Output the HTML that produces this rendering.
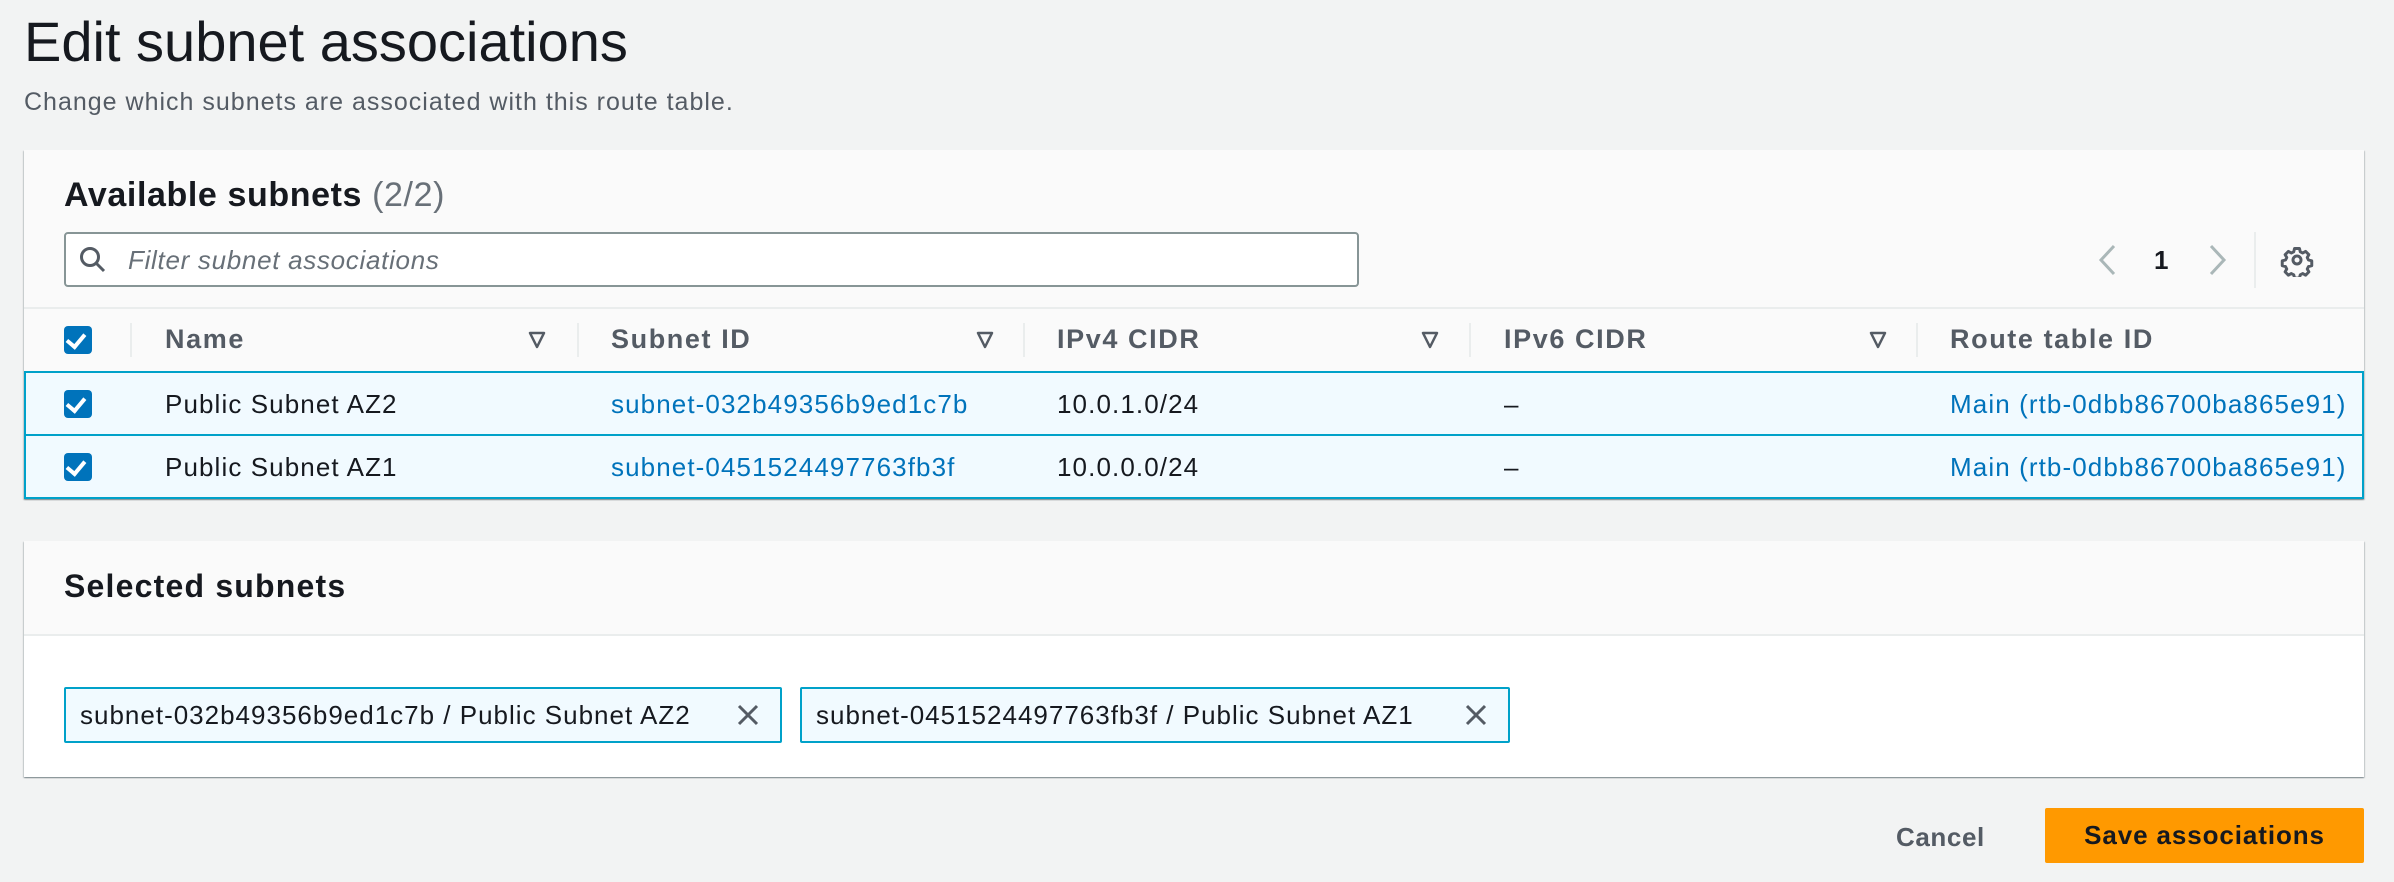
<!DOCTYPE html>
<html><head><meta charset="utf-8"><style>
*{box-sizing:border-box;margin:0;padding:0}
body{width:2394px;height:882px;background:#f2f3f3;font-family:"Liberation Sans",sans-serif;color:#16191f;position:relative;overflow:hidden}
.a{position:absolute;white-space:nowrap}
.card{position:absolute;background:#fff;box-shadow:0 1px 1px 0 rgba(0,28,36,.3),1px 1px 1px 0 rgba(0,28,36,.15),-1px 1px 1px 0 rgba(0,28,36,.15)}
.cb{position:absolute;width:28px;height:28px;background:#0073bb;border-radius:4px}
.cb::after{content:"";position:absolute;left:6px;top:4px;width:8px;height:14px;border:solid #fff;border-width:0 4px 4px 0;transform:rotate(40deg)}
.th{font-weight:bold;color:#545b64;font-size:27px;letter-spacing:1.6px}
.td{font-size:26px;color:#16191f;letter-spacing:1.1px}
.lk{color:#0073bb}
.sep{position:absolute;width:2px;height:34px;background:#eaeded;top:323px}
.tri{position:absolute;top:330px}
.row{position:absolute;left:24px;width:2340px;height:65px;background:#f1faff;border:2px solid #00a1c9}
.tok{position:absolute;top:687px;height:56px;background:#f1faff;border:2px solid #00a1c9;border-radius:2px;font-size:26px;letter-spacing:1px;line-height:52px;padding-left:14px}
</style></head><body>
<div class="a" style="left:24px;top:6px;font-size:56px;line-height:72px">Edit subnet associations</div>
<div class="a" style="left:24px;top:87px;font-size:25px;letter-spacing:1px;color:#545b64;line-height:30px">Change which subnets are associated with this route table.</div>

<div class="card" style="left:24px;top:150px;width:2340px;height:349px;background:#fafafa"></div>
<div class="a" style="left:24px;top:372px;width:2340px;height:127px;background:#fff"></div>
<div class="a" style="left:24px;top:307px;width:2340px;height:2px;background:#eaeded"></div>
<div class="a" style="left:64px;top:175px;font-size:34px;letter-spacing:.6px;font-weight:bold;line-height:40px">Available subnets <span style="font-weight:normal;color:#687078">(2/2)</span></div>
<div class="a" style="left:64px;top:232px;width:1295px;height:55px;background:#fff;border:2px solid #879596;border-radius:4px"></div>
<svg class="a" style="left:78px;top:245px" width="30" height="30" viewBox="0 0 30 30"><circle cx="12" cy="12" r="8.5" fill="none" stroke="#545b64" stroke-width="3"/><path d="M18 18l8 8" stroke="#545b64" stroke-width="3"/></svg>
<div class="a" style="left:128px;top:244px;font-size:26px;letter-spacing:.7px;font-style:italic;color:#687078;line-height:32px">Filter subnet associations</div>
<svg class="a" style="left:2095px;top:243px" width="24" height="34"><path d="M19 3L6 17l13 14" fill="none" stroke="#aab7b8" stroke-width="3"/></svg>
<div class="a" style="left:2154px;top:244px;font-size:26px;font-weight:bold;line-height:32px">1</div>
<svg class="a" style="left:2206px;top:243px" width="24" height="34"><path d="M5 3l13 14L5 31" fill="none" stroke="#aab7b8" stroke-width="3"/></svg>
<div class="a" style="left:2254px;top:232px;width:2px;height:56px;background:#eaeded"></div>
<svg class="a" style="left:2280px;top:243px" width="34" height="34" viewBox="0 0 34 34"><path d="M14 3h6l1 4 3 1.5 3.5-2 4 4-2 3.5 1.5 3 4 1v6l-4 1-1.5 3 2 3.5-4 4-3.5-2-3 1.5-1 4h-6l-1-4-3-1.5-3.5 2-4-4 2-3.5-1.5-3-4-1v-6l4-1 1.5-3-2-3.5 4-4 3.5 2 3-1.5z" transform="translate(17 17) scale(.82) translate(-17 -17)" fill="none" stroke="#545b64" stroke-width="3.6" stroke-linejoin="round"/><circle cx="17" cy="17" r="4" fill="none" stroke="#545b64" stroke-width="3"/></svg>

<div class="cb" style="left:64px;top:326px"></div>
<div class="a th" style="left:165px;top:324px">Name</div>
<div class="a th" style="left:611px;top:324px">Subnet ID</div>
<div class="a th" style="left:1057px;top:324px">IPv4 CIDR</div>
<div class="a th" style="left:1504px;top:324px">IPv6 CIDR</div>
<div class="a th" style="left:1950px;top:324px">Route table ID</div>
<div class="sep" style="left:130px"></div>
<div class="sep" style="left:577px"></div><div class="sep" style="left:1023px"></div><div class="sep" style="left:1469px"></div><div class="sep" style="left:1916px"></div>
<svg class="tri" style="left:527px" width="20" height="20"><path d="M3 3h14L10 17z" fill="none" stroke="#545b64" stroke-width="2.5" stroke-linejoin="round"/></svg>
<svg class="tri" style="left:975px" width="20" height="20"><path d="M3 3h14L10 17z" fill="none" stroke="#545b64" stroke-width="2.5" stroke-linejoin="round"/></svg>
<svg class="tri" style="left:1420px" width="20" height="20"><path d="M3 3h14L10 17z" fill="none" stroke="#545b64" stroke-width="2.5" stroke-linejoin="round"/></svg>
<svg class="tri" style="left:1868px" width="20" height="20"><path d="M3 3h14L10 17z" fill="none" stroke="#545b64" stroke-width="2.5" stroke-linejoin="round"/></svg>

<div class="row" style="top:371px"></div>
<div class="row" style="top:434px"></div>
<div class="cb" style="left:64px;top:390px"></div>
<div class="cb" style="left:64px;top:453px"></div>
<div class="a td" style="left:165px;top:389px">Public Subnet AZ2</div>
<div class="a td lk" style="left:611px;top:389px">subnet-032b49356b9ed1c7b</div>
<div class="a td" style="left:1057px;top:389px">10.0.1.0/24</div>
<div class="a td" style="left:1504px;top:389px">–</div>
<div class="a td lk" style="left:1950px;top:389px">Main (rtb-0dbb86700ba865e91)</div>
<div class="a td" style="left:165px;top:452px">Public Subnet AZ1</div>
<div class="a td lk" style="left:611px;top:452px">subnet-0451524497763fb3f</div>
<div class="a td" style="left:1057px;top:452px">10.0.0.0/24</div>
<div class="a td" style="left:1504px;top:452px">–</div>
<div class="a td lk" style="left:1950px;top:452px">Main (rtb-0dbb86700ba865e91)</div>

<div class="card" style="left:24px;top:541px;width:2340px;height:236px"></div>
<div class="a" style="left:24px;top:541px;width:2340px;height:95px;background:#fafafa;border-bottom:2px solid #eaeded"></div>
<div class="a" style="left:64px;top:568px;font-size:32px;letter-spacing:1.2px;font-weight:bold;line-height:36px">Selected subnets</div>
<div class="tok" style="left:64px;width:718px">subnet-032b49356b9ed1c7b / Public Subnet AZ2</div>
<div class="tok" style="left:800px;width:710px">subnet-0451524497763fb3f / Public Subnet AZ1</div>
<svg class="a" style="left:736px;top:703px" width="24" height="24"><path d="M3 3l18 18M21 3L3 21" stroke="#545b64" stroke-width="3"/></svg>
<svg class="a" style="left:1464px;top:703px" width="24" height="24"><path d="M3 3l18 18M21 3L3 21" stroke="#545b64" stroke-width="3"/></svg>

<div class="a" style="left:1896px;top:822px;font-size:26px;letter-spacing:.6px;font-weight:bold;color:#545b64;line-height:30px">Cancel</div>
<div class="a" style="left:2045px;top:808px;width:319px;height:55px;background:#ff9900;border-radius:2px;font-size:26px;letter-spacing:.9px;font-weight:bold;line-height:55px;text-align:center">Save associations</div>
</body></html>
